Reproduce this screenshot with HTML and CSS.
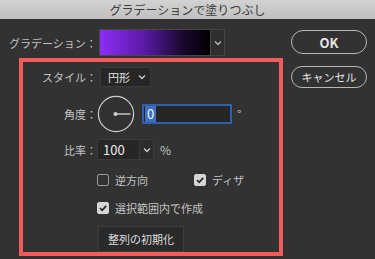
FILE: index.html
```html
<!DOCTYPE html>
<html lang="ja">
<head>
<meta charset="utf-8">
<link rel="stylesheet" href="styles.css">
</head>
<body>
<div class="titlebar">グラデーションで塗りつぶし</div>
<div class="main">
  <div class="left">
    <div class="grad-row">
      <span class="grad-label">グラデーション：</span>
      <div class="swatch"></div>
      <div class="drop">
        <svg width="8" height="6" viewBox="0 0 8 6"><path d="M1 1.5 L4 4.5 L7 1.5" fill="none" stroke="#bdbdbd" stroke-width="1.3"/></svg>
      </div>
    </div>
    <div class="panel">
      <div class="row row-style">
        <span class="lbl">スタイル：</span>
        <div class="select">
          <span>円形</span>
          <svg width="8" height="6" viewBox="0 0 8 6"><path d="M1 1.5 L4 4.5 L7 1.5" fill="none" stroke="#cfcfcf" stroke-width="1.3"/></svg>
        </div>
      </div>
      <div class="row row-angle">
        <span class="lbl">角度：</span>
        <svg class="dial" width="38" height="38" viewBox="0 0 38 38">
          <circle cx="19" cy="19" r="17.6" fill="none" stroke="#cfcfcf" stroke-width="1.2"/>
          <line x1="19" y1="19" x2="33.5" y2="19" stroke="#cfcfcf" stroke-width="1.4"/>
          <circle cx="18.5" cy="19" r="2" fill="#cfcfcf"/>
        </svg>
        <div class="angle-input"><span class="sel">0</span></div>
        <span class="deg">°</span>
      </div>
      <div class="row row-ratio">
        <span class="lbl">比率：</span>
        <div class="num">100</div>
        <div class="num-drop">
          <svg width="8" height="6" viewBox="0 0 8 6"><path d="M1 1.5 L4 4.5 L7 1.5" fill="none" stroke="#cfcfcf" stroke-width="1.3"/></svg>
        </div>
        <span class="pct">%</span>
      </div>
      <div class="row row-check1">
        <label class="chk"><span class="box"></span>逆方向</label>
        <label class="chk chk-dither"><span class="box on"><svg width="10" height="10" viewBox="0 0 10 10"><path d="M2 5.2 L4.2 7.3 L8.2 2.8" fill="none" stroke="#2a2a2a" stroke-width="1.8"/></svg></span>ディザ</label>
      </div>
      <div class="row row-check2">
        <label class="chk"><span class="box on"><svg width="10" height="10" viewBox="0 0 10 10"><path d="M2 5.2 L4.2 7.3 L8.2 2.8" fill="none" stroke="#2a2a2a" stroke-width="1.8"/></svg></span>選択範囲内で作成</label>
      </div>
      <div class="row row-btn">
        <div class="reset">整列の初期化</div>
      </div>
    </div>
  </div>
  <div class="right">
    <div class="pill ok">OK</div>
    <div class="pill cancel">キャンセル</div>
  </div>
</div>
</body>
</html>
```

FILE: styles.css
```css
* { box-sizing: border-box; }
html, body { margin: 0; padding: 0; }
body {
  width: 375px;
  height: 259px;
  overflow: hidden;
  background: #323232;
  font-family: "Noto Sans CJK JP", "Noto Sans", sans-serif;
  font-size: 11px;
  color: #c2c2c2;
}
.titlebar {
  height: 19px;
  background: linear-gradient(#d2d2d2, #c0c0c0);
  color: #3a3a3a;
  font-size: 12px;
  line-height: 19px;
  text-align: center;
}
.main { display: flex; }
.left { width: 291px; }
.right {
  width: 76px;
  padding-top: 11px;
  display: flex;
  flex-direction: column;
  gap: 12px;
}
.grad-row {
  display: flex;
  align-items: center;
  height: 27px;
  margin: 10px 0 0 9px;
}
.grad-label { width: 90px; white-space: nowrap; }
.swatch {
  width: 112px;
  height: 27px;
  border: 1px solid #474747;
  background: linear-gradient(90deg, #8e2df6 0%, #5a1aa6 40%, #1a0830 75%, #000 100%);
}
.drop {
  width: 14px;
  height: 27px;
  border: 1px solid #444;
  border-left: none;
  background: #2e2e2e;
  display: flex;
  align-items: center;
  justify-content: center;
}
.panel {
  margin: 2px 0 0 19px;
  width: 264px;
  height: 198px;
  border: 4px solid #f25c5c;
  display: flex;
  flex-direction: column;
}
.row { display: flex; align-items: center; }
.lbl { width: 74px; text-align: right; white-space: nowrap; }
.row-style { margin-top: 5px; height: 20px; }
.select {
  margin-left: 3px;
  width: 51px;
  height: 20px;
  background: #262626;
  border: 1px solid #3a3a3a;
  display: flex;
  align-items: center;
  justify-content: space-between;
  padding: 0 4px 0 7px;
  color: #e2e2e2;
}
.row-angle { margin-top: 8px; height: 38px; }
.dial { display: block; }
.angle-input {
  margin-left: 7px;
  width: 90px;
  height: 20px;
  border: 2px solid #2f5fae;
  background: #262626;
  display: flex;
  align-items: center;
  padding-left: 1px;
}
.sel {
  background: #3f70c2;
  color: #f2f2f2;
  font-size: 13px;
  line-height: 16px;
  padding: 0 2px;
}
.deg { margin-left: 5px; font-size: 12px; margin-top: -2px; }
.row-ratio { margin-top: 6px; height: 21px; }
.num {
  width: 43px;
  height: 21px;
  background: #262626;
  border: 1px solid #3a3a3a;
  color: #ececec;
  font-size: 13px;
  line-height: 19px;
  padding-left: 5px;
}
.num-drop {
  width: 14px;
  height: 21px;
  background: #2c2c2c;
  border: 1px solid #3a3a3a;
  border-left: none;
  display: flex;
  align-items: center;
  justify-content: center;
}
.pct { margin-left: 6px; font-size: 12px; }
.row-check1 { margin-top: 12px; height: 16px; padding-left: 74px; }
.row-check2 { margin-top: 12px; height: 16px; padding-left: 74px; }
.chk { display: flex; align-items: center; gap: 6px; white-space: nowrap; }
.chk-dither { margin-left: 46px; }
.box {
  width: 12px;
  height: 12px;
  border: 1px solid #9a9a9a;
  border-radius: 2px;
  display: flex;
  align-items: center;
  justify-content: center;
}
.box.on { background: #d6d6d6; border-color: #d6d6d6; }
.row-btn { margin-top: 10px; padding-left: 75px; }
.reset {
  width: 86px;
  height: 26px;
  background: #2a2a2a;
  border: 1px solid #3d3d3d;
  color: #dedede;
  display: flex;
  align-items: center;
  justify-content: center;
}
.pill {
  border: 1.5px solid #b8b8b8;
  border-radius: 13px;
  display: flex;
  align-items: center;
  justify-content: center;
  color: #e4e4e4;
}
.ok { height: 24px; font-weight: bold; font-size: 13px; }
.cancel { height: 22px; font-size: 11px; }
```
